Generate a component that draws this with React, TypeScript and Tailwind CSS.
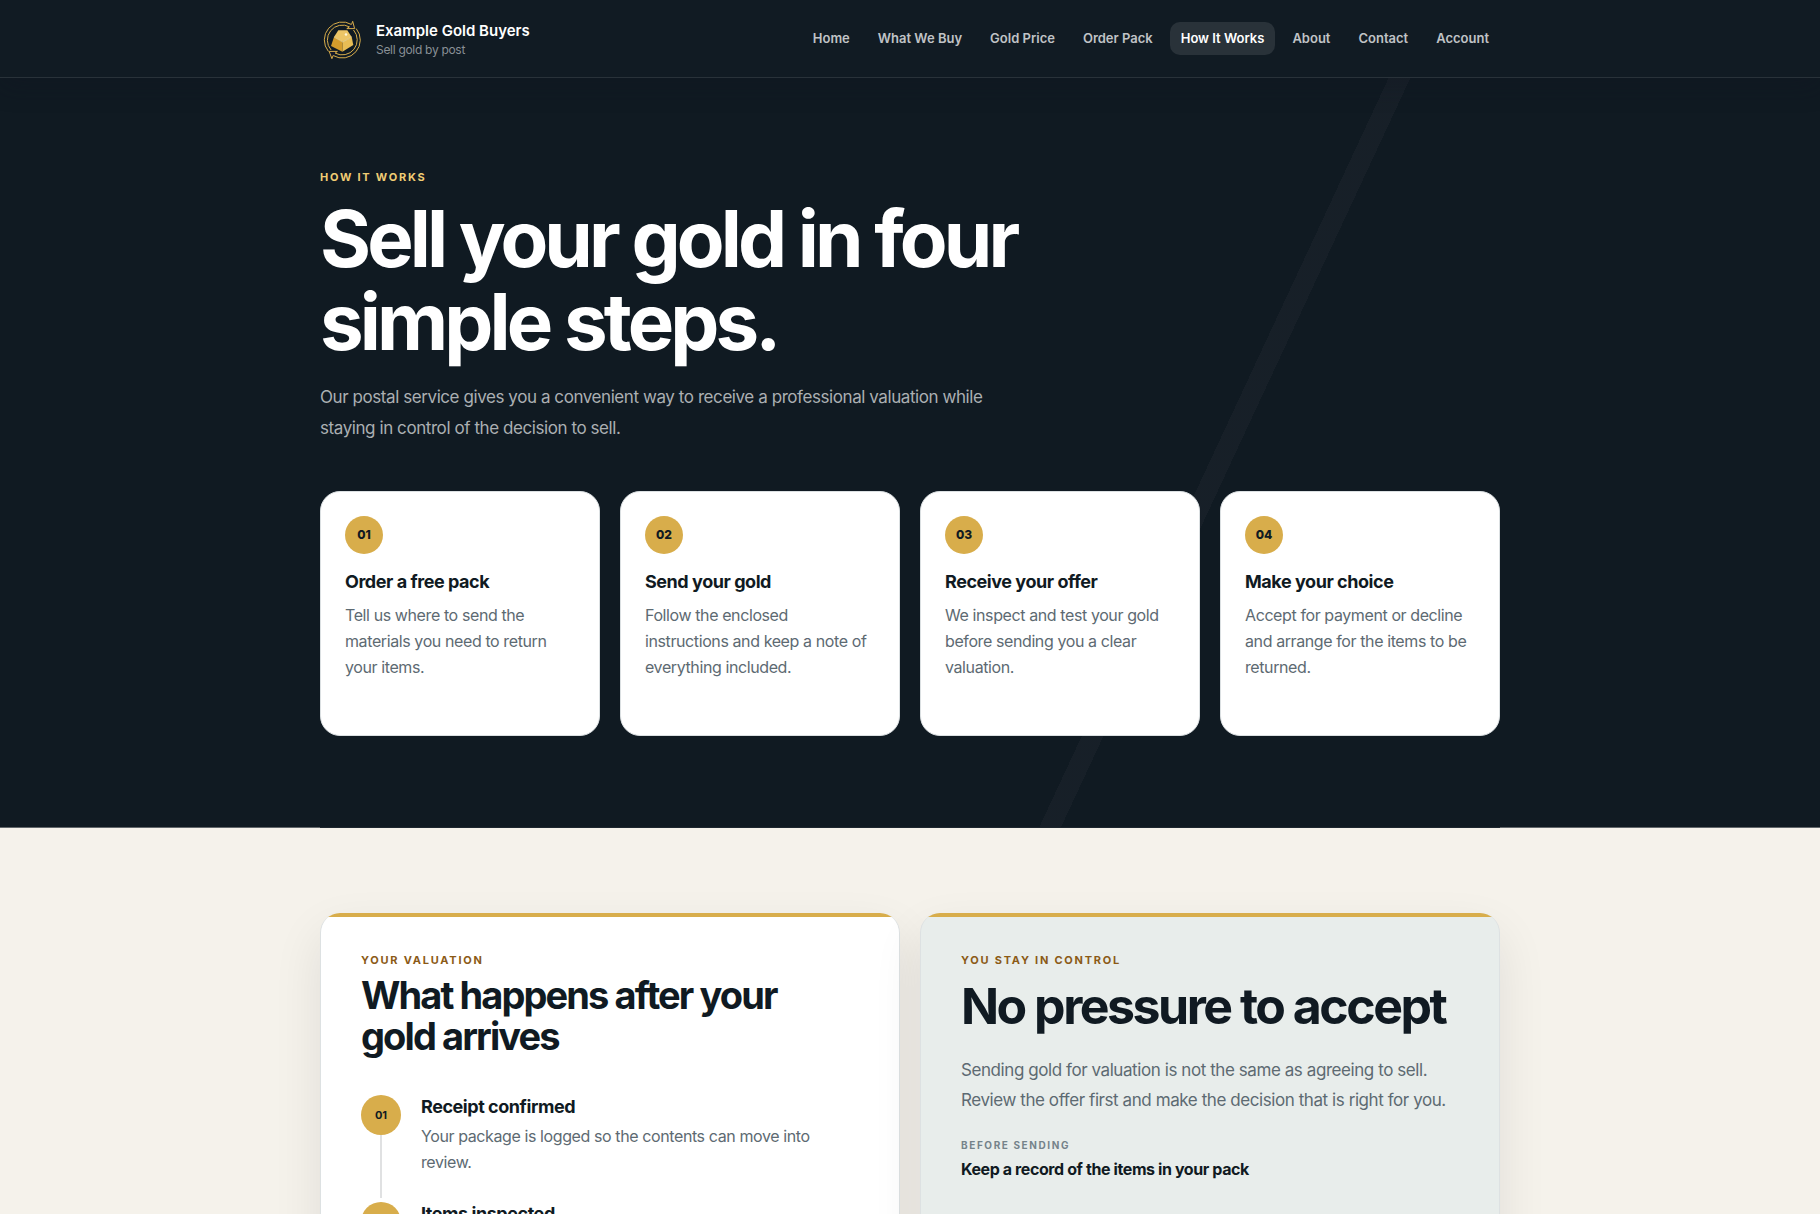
import React from 'react';

const navLinks = ['Home', 'What We Buy', 'Gold Price', 'Order Pack', 'How It Works', 'About', 'Contact', 'Account'];

const steps = [
  { number: '01', title: 'Order a free pack', text: 'Tell us where to send the materials you need to return your items.' },
  { number: '02', title: 'Send your gold', text: 'Follow the enclosed instructions and keep a note of everything included.' },
  { number: '03', title: 'Receive your offer', text: 'We inspect and test your gold before sending you a clear valuation.' },
  { number: '04', title: 'Make your choice', text: 'Accept for payment or decline and arrange for the items to be returned.' },
];

const timeline = [
  { number: '01', title: 'Receipt confirmed', text: 'Your package is logged so the contents can move into review.' },
  { number: '02', title: 'Items inspected', text: '' },
];

const Logo: React.FC = () => (
  <svg viewBox="0 0 44 44" className="h-11 w-11" fill="none" aria-hidden="true">
    <g stroke="#d8ad4b" strokeWidth="1">
      <path d="M31.5 7.5A18 18 0 0 0 8.4 34.4" />
      <path d="M29.5 9.9A15 15 0 0 0 11.1 33" />
      <path d="M13.1 38.5A18 18 0 0 0 36.2 11.6" />
      <path d="M15.1 36.1A15 15 0 0 0 33.5 13" />
      <path d="M31.5 7.5L32.7 4.3L34.6 11.6H26.8L29.5 9.9" fill="#12182c" />
      <path d="M13.1 38.5L11.9 41.7L9.2 34.4H17.4L15.1 36.1" fill="#12182c" />
    </g>
    <path d="M18.3 13.3h9l4.4 6.7-9 5-8.7-5z" fill="#ecc566" />
    <path d="M14 20l8.7 5-.3 9.7L11 29z" fill="#d39c2c" />
    <path d="M31.7 20l1.6 8-10.9 6.7.3-9.7z" fill="#e8bd55" />
    <path d="M14 20l8.7 5 9-5" stroke="#f8e3a4" strokeWidth=".7" />
    <circle cx="26" cy="17.5" r="1.3" fill="#fff6d8" />
  </svg>
);

const Header: React.FC = () => (
  <header className="relative z-10 border-b border-white/10 bg-[#111b23] shadow-[0_8px_24px_rgba(16,20,32,0.3)]">
    <div className="max-w-[1180px] mx-auto h-[77px] flex items-center justify-between">
      <a href="#" className="flex items-center gap-3">
        <Logo />
        <span className="flex flex-col pt-0.5">
          <span className="text-[15px] leading-5 font-semibold text-white">Example Gold Buyers</span>
          <span className="text-xs leading-[18px] text-[#899096] tracking-tight">Sell gold by post</span>
        </span>
      </a>
      <nav className="flex items-center gap-1.5">
        {navLinks.map((link) => (
          <a
            key={link}
            href="#"
            className={
              link === 'How It Works'
                ? 'rounded-[10px] bg-white/10 px-[11px] py-1.5 text-[13px] leading-[21px] font-semibold text-white'
                : 'rounded-[10px] px-[11px] py-1.5 text-[13px] leading-[21px] font-semibold text-[#c0c3c6]'
            }
          >
            {link}
          </a>
        ))}
      </nav>
    </div>
  </header>
);

const Hero: React.FC = () => (
  <section className="bg-[#101a22] bg-[linear-gradient(115deg,transparent_64%,rgba(255,200,220,0.03)_64%,rgba(255,200,220,0.03)_65%,transparent_65%)]">
    <div className="max-w-[1180px] mx-auto py-[91px]">
      <p className="text-[11px] leading-4 font-bold uppercase tracking-[0.16em] text-[#f0cd74]">How it works</p>
      <h1 className="mt-3 max-w-[760px] text-[78px] leading-[83px] font-bold tracking-tighter text-white">
        Sell your gold in four simple steps.
      </h1>
      <p className="mt-[19px] max-w-[700px] text-[17px] leading-[31px] tracking-tight text-[#abafb2]">
        Our postal service gives you a convenient way to receive a professional valuation while staying in control of the decision to sell.
      </p>
      <div className="mt-[47px] grid grid-cols-4 gap-5">
        {steps.map((step) => (
          <article key={step.number} className="min-h-[245px] rounded-[20px] border border-[#dbe0e2] bg-white p-6">
            <span className="flex h-[38px] w-[38px] items-center justify-center rounded-full bg-[#d8ad4b] text-xs font-extrabold text-[#101a22]">
              {step.number}
            </span>
            <h2 className="mt-4 text-lg leading-6 font-bold tracking-tight text-[#101a22]">{step.title}</h2>
            <p className="mt-2 text-base leading-[26px] tracking-tight text-[#5d6a72]">{step.text}</p>
          </article>
        ))}
      </div>
    </div>
    <div className="bg-[#62676b]">
      <div className="mx-auto h-px max-w-[1180px] bg-[#1e272f]" />
    </div>
  </section>
);

const cardClass = 'overflow-hidden rounded-[20px] border border-t-0 border-[#dde1e2] shadow-[0_20px_50px_rgba(16,26,34,0.09)]';

const Valuation: React.FC = () => (
  <section className="bg-[#f5f2eb]">
    <div className="max-w-[1180px] mx-auto grid grid-cols-2 gap-5 py-[85px]">
      <article className={`${cardClass} bg-white`}>
        <div className="h-1 bg-[#d8ad4b]" />
        <div className="px-10 pt-[35px] pb-10">
          <p className="text-[11px] leading-4 font-bold uppercase tracking-[0.16em] text-[#8b5a16]">Your valuation</p>
          <h2 className="mt-[7px] max-w-md text-[38px] leading-[41px] font-bold tracking-tighter text-[#101a22]">What happens after your gold arrives</h2>
          <ol className="mt-[38px]">
            {timeline.map((item) => (
              <li key={item.number} className="flex gap-5">
                <div className="flex w-10 flex-col items-center">
                  <span className="flex h-10 w-10 shrink-0 items-center justify-center rounded-full bg-[#d8ad4b] text-[11px] font-bold text-[#101a22]">
                    {item.number}
                  </span>
                  <span className="mb-1 w-0.5 flex-1 bg-[#e0e1e2]" />
                </div>
                <div className="min-h-[107px] flex-1 pr-5">
                  <h3 className="text-lg leading-6 font-bold tracking-tight text-[#101a22]">{item.title}</h3>
                  <p className="mt-1 text-base leading-[26px] tracking-tight text-[#5d6a72]">{item.text}</p>
                </div>
              </li>
            ))}
          </ol>
        </div>
      </article>

      <article className={`${cardClass} bg-[#e8edeb]`}>
        <div className="h-1 bg-[#d8ad4b]" />
        <div className="px-10 pt-[35px] pb-10">
          <p className="text-[11px] leading-4 font-bold uppercase tracking-[0.16em] text-[#8b5a16]">You stay in control</p>
          <h2 className="mt-[11px] text-[50px] leading-[54px] font-bold tracking-tighter text-[#101a22]">No pressure to accept</h2>
          <p className="mt-[22px] text-[17px] leading-[30px] tracking-tight text-[#5d6a72]">
            Sending gold for valuation is not the same as agreeing to sell. Review the offer first and make the decision that is right for you.
          </p>
          <p className="mt-[22px] text-[10px] leading-4 font-bold uppercase tracking-[0.16em] text-[#75838a]">Before sending</p>
          <p className="mt-1 text-base leading-6 font-bold tracking-tight text-[#101a22]">Keep a record of the items in your pack</p>
        </div>
      </article>
    </div>
  </section>
);

const App: React.FC = () => {
  return (
    <div className="h-screen overflow-hidden bg-[#f5f2eb] font-['Inter',sans-serif]">
      <Header />
      <main>
        <Hero />
        <Valuation />
      </main>
    </div>
  );
};

export default App;
